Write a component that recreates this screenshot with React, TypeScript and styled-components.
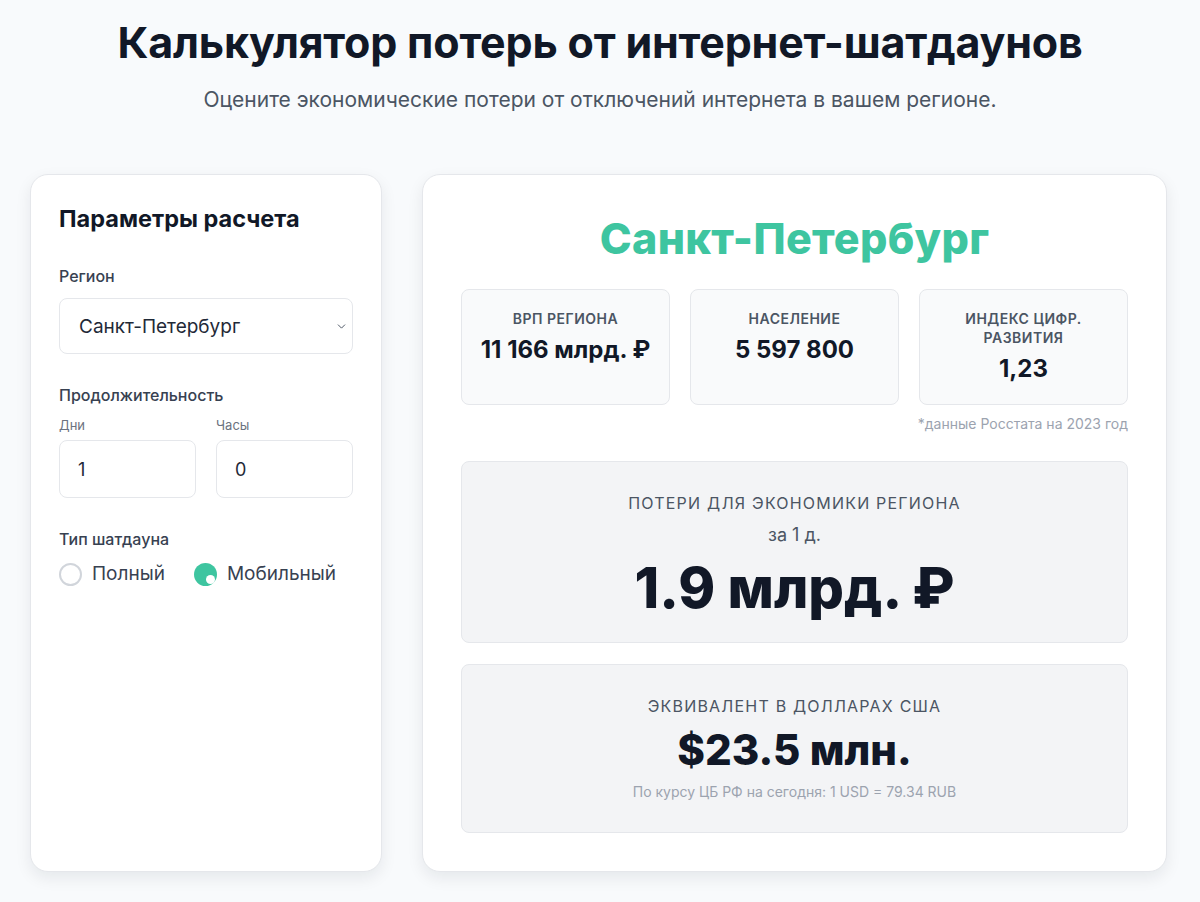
import React, { useState } from 'react'
import styled, { createGlobalStyle } from 'styled-components'
import { ChevronDown } from 'lucide-react'

const GlobalStyle = createGlobalStyle`
  * { box-sizing: border-box; }
  body {
    margin: 0;
    background: #f8fafc;
    font-family: Inter, 'Noto Sans', 'Liberation Sans', sans-serif;
    color: #111827;
  }
`

const Page = styled.div`
  padding: 16px 30px 32px 30px;
`

const Header = styled.header`
  text-align: center;
  margin-bottom: 59px;
`

const Title = styled.h1`
  margin: 0;
  font-size: 43px;
  line-height: 53px;
  font-weight: 700;
  color: #111827;
  letter-spacing: -0.2px;
`

const Subtitle = styled.p`
  margin: 16px 0 0;
  font-size: 21px;
  line-height: 30px;
  color: #4b5563;
`

const Layout = styled.div`
  display: grid;
  grid-template-columns: 352px 1fr;
  gap: 40px;
  padding-right: 3px;
`

const Card = styled.section`
  background: #ffffff;
  border: 1px solid #e5e7eb;
  border-radius: 18px;
  box-shadow: 0 6px 16px rgba(15, 23, 42, 0.08);
`

const ParamsCard = styled(Card)`
  padding: 28px 28px;
`

const ResultCard = styled(Card)`
  padding: 38px 38px;
`

const CardTitle = styled.h2`
  margin: 0 0 29px;
  font-size: 23.5px;
  line-height: 32px;
  font-weight: 700;
  color: #111827;
`

const Field = styled.div`
  margin-bottom: 29px;
`

const Label = styled.div`
  font-size: 16px;
  line-height: 24px;
  font-weight: 500;
  color: #374151;
  margin-bottom: 10px;
`

const DurationLabel = styled(Label)`
  margin-bottom: 8px;
`

const SelectWrap = styled.div`
  position: relative;
`

const Select = styled.select`
  appearance: none;
  width: 100%;
  height: 56px;
  padding: 0 36px 0 19px;
  font-family: inherit;
  font-size: 19px;
  color: #1f2937;
  background: #fff;
  border: 1px solid #e5e7eb;
  border-radius: 8px;
  outline: none;
`

const Chevron = styled(ChevronDown)`
  position: absolute;
  right: 5px;
  top: 22px;
  color: #374151;
  pointer-events: none;
`

const Row = styled.div`
  display: grid;
  grid-template-columns: 1fr 1fr;
  gap: 20px;
`

const SmallLabel = styled.div`
  font-size: 13px;
  line-height: 20px;
  color: #6b7280;
  margin-bottom: 5px;
`

const Input = styled.input`
  width: 100%;
  height: 58px;
  padding: 0 18px;
  font-family: inherit;
  font-size: 18px;
  color: #1f2937;
  background: #fff;
  border: 1px solid #e5e7eb;
  border-radius: 8px;
  outline: none;
`

const RadioGroup = styled.div`
  display: flex;
  gap: 29px;
`

const RadioOption = styled.label`
  display: flex;
  align-items: center;
  gap: 10px;
  font-size: 19px;
  line-height: 26px;
  color: #374151;
  cursor: pointer;
`

const RadioDot = styled.span<{ $checked: boolean }>`
  position: relative;
  width: 23px;
  height: 23px;
  border-radius: 50%;
  border: ${(p) => (p.$checked ? 'none' : '2px solid #d1d5db')};
  background: ${(p) => (p.$checked ? '#3ec5a0' : '#fff')};
  &::after {
    content: '';
    display: ${(p) => (p.$checked ? 'block' : 'none')};
    position: absolute;
    right: 2px;
    bottom: 2px;
    width: 9px;
    height: 9px;
    border-radius: 50%;
    background: #fff;
  }
`

const Region = styled.h2`
  margin: 0 0 26px;
  text-align: center;
  font-size: 43px;
  line-height: 50px;
  font-weight: 800;
  color: #3ec5a0;
  letter-spacing: 0.3px;
`

const Stats = styled.div`
  display: grid;
  grid-template-columns: repeat(3, 1fr);
  gap: 20px;
`

const Stat = styled.div`
  background: #f9fafb;
  border: 1px solid #e5e7eb;
  border-radius: 8px;
  padding: 19px 16px 20px;
  text-align: center;
`

const StatLabel = styled.div`
  font-size: 14px;
  line-height: 19px;
  font-weight: 600;
  color: #4b5563;
  text-transform: uppercase;
  letter-spacing: 0.5px;
`

const StatValue = styled.div`
  margin-top: 6px;
  font-size: 24px;
  line-height: 31px;
  font-weight: 700;
  color: #111827;
`

const Note = styled.div`
  margin-top: 10px;
  text-align: right;
  font-size: 14px;
  line-height: 18px;
  color: #9ca3af;
`

const ResultBox = styled.div<{ $first?: boolean }>`
  margin-top: ${(p) => (p.$first ? '28px' : '21px')};
  background: #f3f4f6;
  border: 1px solid #e5e7eb;
  border-radius: 8px;
  padding: ${(p) => (p.$first ? '30px 24px 19px' : '30px 24px 31px')};
  text-align: center;
`

const BoxLabel = styled.div`
  font-size: 16px;
  line-height: 22px;
  color: #4b5563;
  text-transform: uppercase;
  letter-spacing: 1.2px;
`

const Period = styled.div`
  margin-top: 9px;
  font-size: 18px;
  line-height: 24px;
  color: #4b5563;
`

const BigValue = styled.div`
  margin-top: 6px;
  font-size: 56px;
  line-height: 70px;
  font-weight: 800;
  color: #111827;
`

const UsdValue = styled.div`
  margin-top: 6px;
  font-size: 42px;
  line-height: 54px;
  font-weight: 800;
  color: #111827;
`

const Rate = styled.div`
  margin-top: 6px;
  font-size: 14px;
  line-height: 18px;
  color: #9ca3af;
`

export default function App() {
  const [type, setType] = useState<'full' | 'mobile'>('mobile')

  return (
    <Page>
      <GlobalStyle />
      <Header>
        <Title>Калькулятор потерь от интернет-шатдаунов</Title>
        <Subtitle>Оцените экономические потери от отключений интернета в вашем регионе.</Subtitle>
      </Header>
      <Layout>
        <ParamsCard>
          <CardTitle>Параметры расчета</CardTitle>
          <Field>
            <Label>Регион</Label>
            <SelectWrap>
              <Select defaultValue="spb">
                <option value="spb">Санкт-Петербург</option>
                <option value="msk">Москва</option>
              </Select>
              <Chevron size={13} strokeWidth={1.6} />
            </SelectWrap>
          </Field>
          <Field>
            <DurationLabel>Продолжительность</DurationLabel>
            <Row>
              <div>
                <SmallLabel>Дни</SmallLabel>
                <Input defaultValue="1" />
              </div>
              <div>
                <SmallLabel>Часы</SmallLabel>
                <Input defaultValue="0" />
              </div>
            </Row>
          </Field>
          <Field>
            <Label>Тип шатдауна</Label>
            <RadioGroup>
              <RadioOption onClick={() => setType('full')}>
                <RadioDot $checked={type === 'full'} />
                Полный
              </RadioOption>
              <RadioOption onClick={() => setType('mobile')}>
                <RadioDot $checked={type === 'mobile'} />
                Мобильный
              </RadioOption>
            </RadioGroup>
          </Field>
        </ParamsCard>

        <ResultCard>
          <Region>Санкт-Петербург</Region>
          <Stats>
            <Stat>
              <StatLabel>ВРП региона</StatLabel>
              <StatValue>11 166 млрд. ₽</StatValue>
            </Stat>
            <Stat>
              <StatLabel>Население</StatLabel>
              <StatValue>5 597 800</StatValue>
            </Stat>
            <Stat>
              <StatLabel>Индекс цифр. развития</StatLabel>
              <StatValue>1,23</StatValue>
            </Stat>
          </Stats>
          <Note>*данные Росстата на 2023 год</Note>
          <ResultBox $first>
            <BoxLabel>Потери для экономики региона</BoxLabel>
            <Period>за 1 д.</Period>
            <BigValue>1.9 млрд. ₽</BigValue>
          </ResultBox>
          <ResultBox>
            <BoxLabel>Эквивалент в долларах США</BoxLabel>
            <UsdValue>$23.5 млн.</UsdValue>
            <Rate>По курсу ЦБ РФ на сегодня: 1 USD = 79.34 RUB</Rate>
          </ResultBox>
        </ResultCard>
      </Layout>
    </Page>
  )
}
